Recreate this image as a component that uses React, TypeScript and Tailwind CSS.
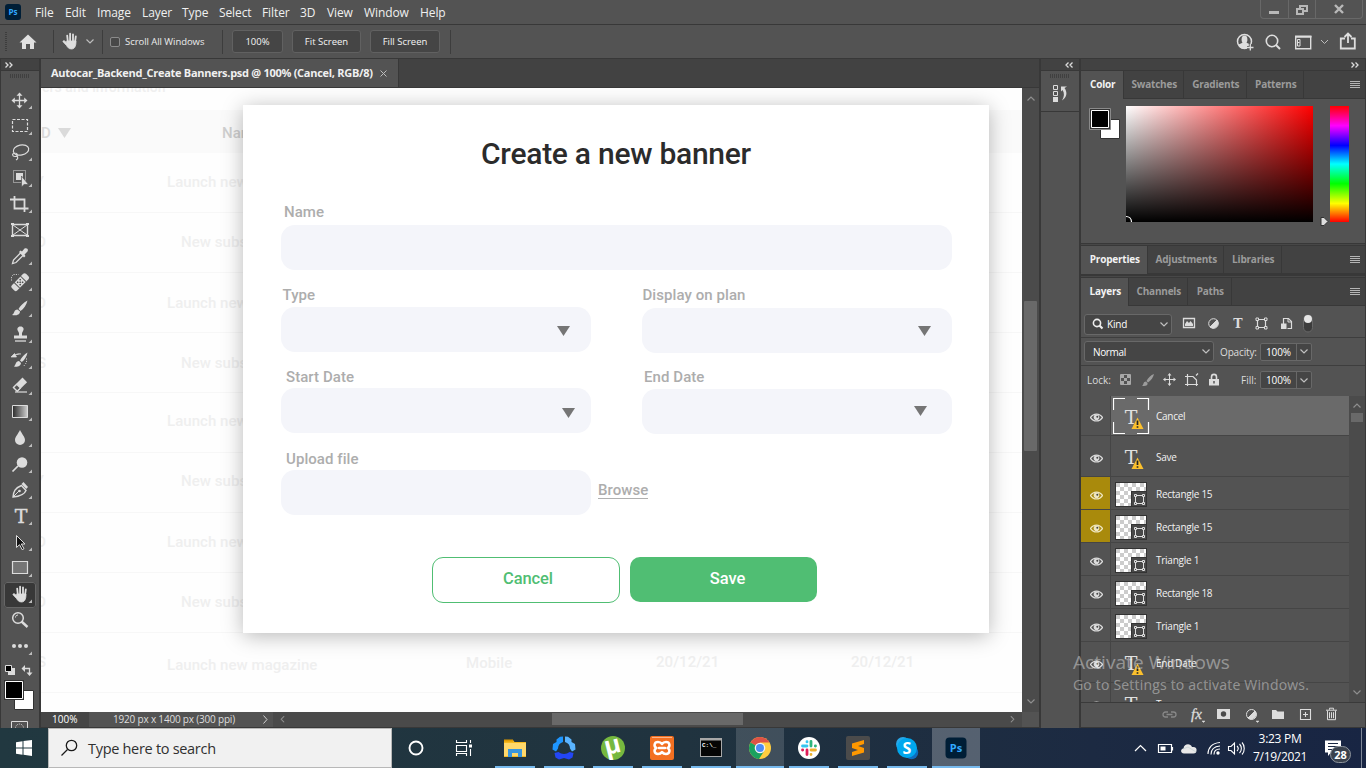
import React from "react";

const UI = "font-['Open_Sans','Noto_Sans',sans-serif]";

/* ---------- shared bits ---------- */

function Chevron({ className, size = 8 }: { className?: string; size?: number }) {
  return (
    <svg className={className} width={size} height={size / 2 + 1} viewBox="0 0 8 5" fill="none" stroke="currentColor" strokeWidth="1.2">
      <path d="M.5.5 4 4 7.5.5" />
    </svg>
  );
}

function DoubleArrow({ flip = false }: { flip?: boolean }) {
  return (
    <svg className={flip ? "rotate-180" : ""} width="8" height="6" viewBox="0 0 8 6" fill="none" stroke="#dcdcdc" strokeWidth="1.3">
      <path d="M.5.5 3 3 .5 5.5M4.5.5 7 3 4.5 5.5" />
    </svg>
  );
}

function Hand({ x = 0, y = 0 }: { x?: number; y?: number }) {
  return (
    <g transform={`translate(${x} ${y})`} stroke="#dedede" strokeLinecap="round" fill="none">
      <path d="M5.2 3.2 5.8 9M8.1 1.2V9M11 1.8V9M13.8 4 13 10" strokeWidth="1.8" />
      <path d="M4.8 8.5H14C14 12 13.500 16.500 9.5 16.500 6.5 16.500 5.5 14.5 4.5 13L1 9.2C.8 8.2 2 8 2.6 8.4L5 10.5Z" fill="#dedede" strokeWidth=".8" strokeLinejoin="round" />
    </g>
  );
}

/* ---------- top bars ---------- */

const menus: [string, string][] = [
  ["File", "w-[30px]"],
  ["Edit", "w-8"],
  ["Image", "w-[45px]"],
  ["Layer", "w-10"],
  ["Type", "w-[37px]"],
  ["Select", "w-[43px]"],
  ["Filter", "w-[38px]"],
  ["3D", "w-[27px]"],
  ["View", "w-[37px]"],
  ["Window", "w-14"],
  ["Help", "w-8"],
];

function MenuBar() {
  return (
    <header className="flex h-[25px] shrink-0 justify-between border-b border-[#383838] bg-[#535353]">
      <div className="flex items-center">
        <div className="ml-[5px] flex h-4 w-4 items-center justify-center rounded-[3px] bg-[#001e36] text-[8px] font-bold leading-none text-[#31a8ff]">Ps</div>
        <nav className="ml-[14px] flex pt-px text-[12px] leading-none tracking-[-0.100px] text-[#f0f0f0]">
          {menus.map(([m, w]) => (
            <span key={m} className={`${w} shrink-0 whitespace-nowrap`}>{m}</span>
          ))}
        </nav>
      </div>
      <div className="mr-[3px] flex h-[19px] rounded-b border border-t-0 border-[#686868]">
        <div className="flex w-7 justify-center border-r border-[#686868]">
          <svg className="-ml-[2px]" width="12" height="18"><path d="M1 11h10v3H1z" fill="#b8b8b8" /></svg>
        </div>
        <div className="flex w-[27px] justify-center border-r border-[#686868]">
          <svg width="14" height="18" fill="none" stroke="#b8b8b8" strokeWidth="2"><path d="M5 9V6h7v5H9M2 9h6v5H2z" /></svg>
        </div>
        <div className="flex w-[46px] justify-center">
          <svg width="12" height="18" stroke="#b8b8b8" strokeWidth="2.400"><path d="m2 5 8 8M10 5l-8 8" /></svg>
        </div>
      </div>
    </header>
  );
}

function OptButton({ label, w }: { label: string; w: string }) {
  return (
    <button className={`${w} h-[23px] rounded-[3px] border-[1.500px] border-[#616161] bg-[#454545] text-[9.500px] leading-none text-[#f4f4f4]`}>{label}</button>
  );
}

function OptionsBar() {
  return (
    <div className="flex h-[34px] shrink-0 items-center justify-between border-b border-[#383838] bg-[#535353]">
      <div className="flex items-center">
        <svg width="56" height="33">
          <path d="M6 7v19" stroke="#3d3d3d" strokeWidth="2" strokeDasharray="1 1" />
          <path d="m28 9.500 8.500 8H34V24h-4v-5h-4v5h-4v-6.500h-2.500z" fill="#e0e0e0" />
          <path d="M53.500 5v23" stroke="#3d3d3d" />
        </svg>
        <svg width="28" height="33"><Hand x={6} y={7.500} /></svg>
        <Chevron className="ml-[2px] text-[#bdbdbd]" />
        <div className="ml-2 h-6 w-px bg-[#3d3d3d]" />
        <div className="ml-[7px] h-[10px] w-[10px] rounded-[2px] border border-[#8b8b8b] bg-[#484848]" />
        <span className="ml-[5px] w-24 whitespace-nowrap text-[9.500px] leading-none tracking-[-0.050px] text-[#ececec]">Scroll All Windows</span>
        <div className="ml-px h-6 w-px bg-[#3d3d3d]" />
        <div className="ml-[9px] flex gap-[9px]">
          <OptButton label="100%" w="w-[51px]" />
          <OptButton label="Fit Screen" w="w-[69px]" />
          <OptButton label="Fill Screen" w="w-[70px]" />
        </div>
        <div className="ml-[10px] h-6 w-px bg-[#3d3d3d]" />
      </div>
      <svg width="140" height="33" fill="none" stroke="#dedede">
        <circle cx="18.500" cy="16.500" r="7" strokeWidth="1.500" />
        <path d="M12.500 19.500C14 18.500 16 18.500 16.500 17.500h4c.5 1 2.500 1 4 2-1.500 3.500-4 4.500-6 4.500s-5-1-6-4.500z" fill="#dedede" stroke="none" />
        <ellipse cx="18.500" cy="14.500" rx="2.900" ry="4" fill="#dedede" stroke="none" />
        <path d="M21 22.500h6.500M24.300 19v6.500" stroke="#535353" strokeWidth="3" />
        <path d="M21 22.500h6.500M24.300 19v6.500" strokeWidth="1.300" />
        <circle cx="46" cy="16" r="5.700" strokeWidth="1.600" />
        <path d="m50 20 4 4" strokeWidth="2" />
        <path d="M69.700 11.700h15v12h-15z" strokeWidth="1.400" />
        <path d="M69 11.500h16.500" strokeWidth="2" />
        <path d="M71.500 14.500h2.500v6.500h-2.500zM71.500 17.500h2" strokeWidth="1" />
        <path d="m95 15 3.500 3.500 3.500-3.500" stroke="#bdbdbd" />
        <path d="M119 13.500h-4.200v10h14v-10H125M122 18V8.500M118.500 12 122 8.500l3.500 3.500" strokeWidth="1.800" />
      </svg>
    </div>
  );
}

/* ---------- tool column ---------- */

const L = "#dcdcdc";
const tools: { name: string; icon: React.ReactNode; menu?: boolean }[] = [
  { name: "move", icon: <><path d="M13.500 6v13M7 12.500h13" stroke={L} strokeWidth="1.300" /><path d="m13.500 4.500 3 3.300h-6zM13.500 20.500l3-3.300h-6zM5.500 12.500l3.300-3v6zM21.500 12.500l-3.300-3v6z" fill={L} /></> },
  { name: "marquee", icon: <path d="M6.500 5.500h15v12h-15z" fill="none" stroke={L} strokeWidth="1.200" strokeDasharray="3 1.500" /> },
  { name: "lasso", icon: <g fill="none" stroke={L} strokeWidth="1.200"><ellipse cx="15" cy="10" rx="7.800" ry="5" transform="rotate(-12 15 10)" /><path d="M8 13.500c-2 0-2 3 1 3s3-3 .5-3.500M10.500 15.500c2 2 1.500 3.500-.5 4.500" /></g> },
  { name: "object-select", icon: <><path d="M7.500 4.500h12v12h-12z" fill="none" stroke={L} strokeDasharray="1 1" /><path d="M10 7h7v7h-7z" fill={L} /><path d="M15.500 10v11l2.600-2.500h4.400z" fill={L} stroke="#535353" strokeWidth=".7" /></> },
  { name: "crop", icon: <path d="M4 7.500h14.500V20M8.500 4v12.500H22.500" fill="none" stroke={L} strokeWidth="1.800" /> },
  { name: "frame", menu: false, icon: <g fill="none" stroke={L}><path d="M6.500 6.500h15v11h-15z" strokeWidth="1.400" /><path d="m7 7 14 10M21 7 7 17" /><path d="M5 5h3v2H5zM20 5h3v2h-3zM5 17h3v2H5zM20 17h3v2h-3z" fill={L} stroke="none" /></g> },
  { name: "eyedropper", icon: <g transform="translate(0 -.5)"><path d="m15 9-7.500 7.500L6.500 20l3.500-1 7.500-7.500" fill="none" stroke={L} strokeWidth="1.300" /><path d="m13 8.500 1.500-1.500 1.500 1L18.500 5c3-1 4 1 3 3L18.500 11l1 1.500L18 14z" fill={L} /></g> },
  { name: "healing", icon: <g transform="translate(0 -1)"><g transform="rotate(-45 14 13)"><rect x="4" y="9.500" width="20" height="7.500" rx="2" fill={L} /><path d="M9.500 9v8M18.500 9v8" stroke="#535353" /><path d="M11.500 11.500h1.500M15 11.500h1.500M11.500 15h1.500M15 15h1.500M13.200 13.300h1.500" stroke="#444" strokeWidth="1.400" /></g><path d="M5.500 11.500v-4l2-2h5" stroke={L} strokeDasharray="1 1.300" fill="none" /></g> },
  { name: "brush", icon: <path d="M21.500 4.500c-4 2-7.500 5.500-9 8.500l2 2c3-2 6-6 7-10.500zM11.500 13.500c-4 0-2.500 4-5.500 5.500 3.500 1 8 0 8-3.500z" fill={L} /> },
  { name: "stamp", icon: <g transform="translate(0 -.5)"><path d="M14.500 5c3 0 3.800 2.500 2.500 4.500l-1 2V14h5v3H8v-3h5v-2.500l-1-2C10.700 7.500 11.500 5 14.500 5z" fill={L} /><path d="M9 19.500h11" stroke={L} strokeWidth="1.300" /></g> },
  { name: "history-brush", icon: <g transform="translate(0 -.5)"><path d="M21.500 5c-3 1.500-6 5-7.500 8l1.800 1.500c3-2 5-6 5.700-9.500zM13 13.500c-3.500 0-3 4-5 5.500 3 1 7-.5 7-3.500z" fill={L} /><path d="M5 9.500 8.500 6l2 3.500zM8 8c2-1.500 5-2 7-1.500" fill={L} stroke={L} strokeWidth=".7" /><path d="M20.500 11v4l-3 4" stroke={L} fill="none" strokeDasharray="1 1.400" /></g> },
  { name: "eraser", icon: <><g transform="rotate(-45 14 11)"><path d="M7 7.500h14v6.500H7z" fill={L} /><path d="M7.700 8.200h4.500v5.200H7.700z" fill="#535353" stroke={L} strokeWidth="1.200" /></g><path d="M9 18h12" stroke={L} strokeWidth="1.200" /></> },
  { name: "gradient", icon: <><defs><linearGradient id="tg"><stop stopColor="#2a2a2a" /><stop offset="1" stopColor="#cfcfcf" /></linearGradient></defs><path d="M6.500 5.500h15v12h-15z" fill="url(#tg)" stroke={L} /></> },
  { name: "blur", icon: <path d="M14 4.500c2 4 5 7 5 10a5 5 0 0 1-10 0c0-3 3-6 5-10z" fill={L} transform="translate(0 -.5)" /> },
  { name: "dodge", icon: <><circle cx="16" cy="10.500" r="5.300" fill={L} /><path d="m12 14-5.500 5.500" stroke={L} strokeWidth="1.700" /></> },
  { name: "pen", icon: <g transform="translate(0 -.5)"><path d="M7 19.500C7.500 14 9 10.500 15.500 8l4.500 5c-2 5-7 6-13 6.500z" fill="none" stroke={L} strokeWidth="1.400" /><path d="m7.500 19 5.500-5.500" stroke={L} /><circle cx="13.500" cy="13.500" r="1.300" fill={L} /><path d="m15.500 6.500 2-2 4.500 5-1.800 2z" fill={L} /></g> },
  { name: "type", icon: <text x="15" y="19" textAnchor="middle" fontFamily="DejaVu Serif" fontSize="19" fill={L} stroke={L} strokeWidth=".4">T</text> },
  { name: "path-select", icon: <path d="M10.500 5.500V17.500l3-2.800 2.700 5 1.800-1-2.700-4.700H19z" fill="#151515" stroke={L} /> },
  { name: "rectangle", icon: <path d="M6.500 5.500h15v12h-15z" fill="#757575" stroke={L} strokeWidth="1.200" /> },
  { name: "hand", icon: <Hand x={6} y={3.500} /> },
  { name: "zoom", menu: false, icon: <g fill="none" stroke={L}><circle cx="12" cy="10" r="5.300" strokeWidth="1.500" /><path d="M9.500 9.500c0-1.500 1-2.500 2.500-2.500" /><path d="m15.500 13.500 6 5.500" strokeWidth="2.400" /></g> },
  { name: "more", icon: <g fill={L}><circle cx="8" cy="12" r="2" /><circle cx="14" cy="12" r="2" /><circle cx="20" cy="12" r="2" /></g> },
];

function ToolColumn() {
  return (
    <aside className="flex w-[41px] shrink-0 flex-col overflow-hidden border-l border-r-2 border-[#383838] bg-[#535353]">
      <div className="flex h-3 shrink-0 items-center border-b border-[#383838] bg-[#424242] pl-1"><DoubleArrow /></div>
      <svg className="shrink-0" width="38" height="17"><path d="M9 5h20" stroke="#404040" strokeWidth="4" strokeDasharray="1 1" /></svg>
      {tools.map((t) => (
        <div key={t.name} className="flex h-[26px] shrink-0 pl-[3px]">
          <svg width="32" height="26" viewBox="-2 0 32 26" className={t.name === "hand" ? "h-[26px] rounded-[3px] bg-[#383838] outline outline-1 -outline-offset-1 outline-[#666]" : ""}>
            {t.icon}
            {t.menu !== false && <path d="M26 17.500V21h-3.500z" fill="#bdbdbd" />}
          </svg>
        </div>
      ))}
      <svg className="shrink-0" width="38" height="68">
        <path d="M7 8h7v7H7z" fill={L} /><path d="M4.500 5.500h6v6h-6z" fill="#000" stroke={L} />
        <path d="M23 8.500h5.500V14" stroke={L} strokeWidth="1.300" fill="none" /><path d="M20.500 8.500 24 5v7zM28.500 16l-3-3.500h6z" fill={L} />
        <path d="M13.500 30.500h19v19h-19z" fill="#fff" stroke="#333" />
        <path d="M3 20h20v20H3z" fill="#333" /><path d="M4.500 21.500h17v17h-17z" fill="#000" stroke="#fff" />
        <path d="M10.500 61.500h16v10h-16z" fill="none" stroke={L} /><circle cx="18.500" cy="68" r="4" fill="none" stroke={L} strokeDasharray="1 1" />
      </svg>
    </aside>
  );
}

/* ---------- document ---------- */

const rows: [string, string, string, string][] = [
  ["MONTHLY", "w-[3px]", "Launch new magazine", "pl-[126px]"],
  ["AD", "w-[5px]", "New subscription", "pl-[140px]"],
  ["AD", "w-[5px] pt-[2px]", "Launch new magazine", "pl-[126px] pt-[2px]"],
  ["ADS", "w-[5px] pt-px", "New subscription", "pl-[140px] pt-px"],
  ["", "w-0", "Launch new magazine", "pl-[126px] pb-[2px]"],
  ["MONTHLY", "w-[3px] pb-[2px]", "New subscription", "pl-[140px] pb-[2px]"],
  ["AD", "w-[5px]", "Launch new magazine", "pl-[126px]"],
  ["AD", "w-[5px]", "New subscription", "pl-[140px]"],
  ["ADS", "w-[5px]", "Launch new magazine", "pl-[126px] pt-[5px]"],
];

function Backdrop() {
  return (
    <div className="flex flex-col text-[15px] font-medium leading-none text-[#efefef]">
      <div className="flex h-[22px] items-start overflow-hidden"><span className="-mt-[8px] ml-px whitespace-nowrap text-[14px] tracking-[0.050px]">ers and information</span></div>
      <div className="flex h-[43px] items-center bg-[#fafafa] pt-[3px] text-[#d9d9d9]">
        <span className="w-[17px]">D</span>
        <svg width="13" height="10"><path d="M0 0h13L6.500 10z" fill="#dadada" /></svg>
        <span className="ml-[151px] text-[#cfcfcf]">Name</span>
      </div>
      {rows.map(([kind, shift, name, pad], i) => (
        <div key={i} className="grid h-[60px] shrink-0 grid-cols-1 items-center border-b border-[#f7f7f7]">
          <div className={`${shift} col-start-1 row-start-1 flex justify-end overflow-hidden`}><span className="whitespace-nowrap">{kind}</span></div>
          <div className={`${pad} col-start-1 row-start-1 flex`}>
            <span className="w-[299px] whitespace-nowrap tracking-[0.050px]">{name}</span>
            {i === 8 && (
              <>
                <span className="-mt-[2px] w-[190px] shrink-0 tracking-[0.100px]">Mobile</span>
                <span className="-mt-[3px] w-[195px] shrink-0 tracking-[0.050px]">20/12/21</span>
                <span className="-mt-[3px] tracking-[0.050px]">20/12/21</span>
              </>
            )}
          </div>
        </div>
      ))}
    </div>
  );
}

function Field({ label, labelPad, labelH = "h-[21px]", fieldClass = "w-[310px]", arrow, className = "" }: { label: string; labelPad: string; labelH?: string; fieldClass?: string; arrow?: string; className?: string }) {
  return (
    <label className={`flex flex-col ${className}`}>
      <span className={`${labelPad} ${labelH} text-[15px] font-medium leading-[18px] tracking-[0.070px] text-[#adadad]`}>{label}</span>
      <span className={`${fieldClass} flex h-[45px] items-center justify-end rounded-[14px] bg-[#f4f5fa]`}>
        {arrow && <svg className={arrow} width="13" height="10"><path d="M0 0h13L6.500 10z" fill="#757575" /></svg>}
      </span>
    </label>
  );
}

function BannerDialog() {
  return (
    <section className="absolute left-[202px] top-[17px] flex h-[528px] w-[746px] flex-col bg-white pl-[38px] shadow-[0_3px_20px_rgba(0,0,0,0.280)]">
      <h1 className="mt-[31px] h-[67px] w-[670px] text-center text-[30px] font-medium leading-9 tracking-[-0.260px] text-[#2b2b2b]">Create a new banner</h1>
      <Field label="Name" labelPad="pl-[3px]" labelH="h-[22px]" fieldClass="w-[671px]" />
      <div className="mt-4 flex gap-[51px]">
        <Field label="Type" labelPad="pl-[1.500px]" arrow="mr-[21px] mt-[2px]" />
        <Field label="Display on plan" labelPad="pl-[0.500px]" labelH="h-[22px]" arrow="mr-[21px]" />
      </div>
      <div className="mt-[15px] flex gap-[51px]">
        <Field label="Start Date" labelPad="pl-[5px]" labelH="h-5" arrow="mr-4 mt-1" />
        <Field label="End Date" labelPad="pl-[2px]" arrow="mr-[25px] -mt-[2px]" />
      </div>
      <div className="mt-4 flex">
        <Field label="Upload file" labelPad="pl-[5px]" labelH="h-5" />
        <a className="ml-[7px] mt-[31px] h-[18px] border-b border-[#b0b0b0] text-[15px] font-medium leading-[18px] tracking-[0.070px] text-[#adadad]">Browse</a>
      </div>
      <div className="ml-[151px] mt-[42px] flex gap-[10px] text-[16.500px] font-medium">
        <button className="h-[46px] w-[188px] rounded-[11px] border-[1.500px] border-[#50be73] pb-[2px] pl-1 tracking-[-0.100px] text-[#50be73]">Cancel</button>
        <button className="h-[45px] w-[187px] rounded-[10px] bg-[#50be73] pb-px pl-2 tracking-[-0.100px] text-white">Save</button>
      </div>
    </section>
  );
}

function DocumentArea() {
  return (
    <main className="flex w-[999px] shrink-0 flex-col border-r border-[#383838] bg-[#424242]">
      <div className="flex h-[29px] shrink-0 border-b border-[#383838]">
        <div className="flex w-[358px] items-center border-r border-[#383838] bg-[#535353] pl-[10px] text-[11px] font-bold text-[#f0f0f0]">
          <span className="w-[329px] whitespace-nowrap tracking-[-0.280px]">Autocar_Backend_Create Banners.psd @ 100% (Cancel, RGB/8)</span>
          <svg width="7" height="7" stroke="#bdbdbd"><path d="m.5.5 6 6M6.500.5l-6 6" /></svg>
        </div>
      </div>
      <div className="flex h-[624px] shrink-0">
        <div className="relative h-full w-[981px] overflow-hidden bg-[#fefefe] font-[Roboto,sans-serif]">
          <Backdrop />
          <BannerDialog />
        </div>
        <div className="flex w-[17px] flex-col items-center justify-between bg-[#4b4b4b] py-2 text-[#8f8f8f]">
          <Chevron className="rotate-180" />
          <div className="mb-12 h-[150px] w-[13px] rounded-[1px] bg-[#696969]" />
          <Chevron />
        </div>
      </div>
      <div className="flex h-[15px] shrink-0 items-center text-[10px] leading-none text-[#dedede]">
        <span className="flex h-full w-12 items-center bg-[#464646] pb-px pl-[11px] text-white">100%</span>
        <span className="flex h-full w-[184px] items-center justify-between bg-[#535353] pb-px pl-6 pr-[5px]">
          <span className="whitespace-nowrap tracking-[-0.190px]">1920 px x 1400 px (300 ppi)</span>
          <svg width="5" height="9" fill="none" stroke="#d0d0d0"><path d="m.5.5 3.500 4-3.500 4" /></svg>
        </span>
        <span className="flex h-full w-[749px] items-center bg-[#4a4a4a] pb-px text-[#8f8f8f]">
          <Chevron className="ml-[6px] rotate-90" size={7} />
          <span className="ml-[266px] h-3 w-[191px] bg-[#696969]" />
          <Chevron className="ml-[266px] -rotate-90" size={7} />
        </span>
        <span className="h-full flex-1 bg-[#535353]" />
      </div>
      <div className="flex-1 bg-[#383838]" />
    </main>
  );
}

/* ---------- right dock ---------- */

function IconDock() {
  return (
    <aside className="flex w-[38px] shrink-0 flex-col bg-[#535353]">
      <div className="flex h-3 items-center border-b border-[#383838] bg-[#424242] pl-6"><DoubleArrow flip /></div>
      <svg width="38" height="41" fill="none">
        <path d="M9 5h20" stroke="#404040" strokeWidth="4" strokeDasharray="1 1" />
        <path d="M12.500 14.500h4v4h-4zM12.500 20.500h4v4h-4z" stroke={L} /><path d="M12 26h5v5h-5z" fill={L} />
        <path d="M20 15.500h6l-2.500 1.500c3.500 5 2 9.500-2.500 12.500 2.500-4 2.500-7.500.5-10.500L20 20.500z" fill={L} />
        <path d="M0 40.500h38" stroke="#383838" />
      </svg>
    </aside>
  );
}

function Tabs({ items, h = "h-7" }: { items: [string, string][]; h?: string }) {
  return (
    <div className={`flex ${h} shrink-0 bg-[#424242] text-[10px] font-bold leading-none tracking-[-0.200px] text-[#9b9b9b]`}>
      {items.map(([label, w], i) => (
        <span key={label} className={`${w} flex items-center justify-center whitespace-nowrap border-r border-[#383838] pl-[1.500px] ${i === 0 ? "bg-[#535353] pb-[3px] text-[#f2f2f2]" : "border-b pb-[2px]"}`}>{label}</span>
      ))}
      <span className="flex flex-1 items-center justify-end border-b border-[#383838] pr-[5px]">
        <svg width="10" height="8" stroke="#b5b5b5"><path d="M0 .5h10M0 2.500h10M0 4.500h10M0 6.500h10" /></svg>
      </span>
    </div>
  );
}

function ColorPanel() {
  return (
    <div className="flex h-[144px] shrink-0 pt-[7px]">
      <svg className="ml-2" width="37" height="40">
        <path d="M11.500 13.500h19v19h-19z" fill="#fff" stroke="#333" />
        <path d="M.5 2.500h21v21H.5z" fill="#333" stroke="#8a8a8a" />
        <path d="M2.500 4.500h17v17h-17z" fill="#000" stroke="#fff" />
      </svg>
      <div className="flex h-[116px] w-[187px] items-end bg-[linear-gradient(to_top,#000,transparent),linear-gradient(to_right,#fff,#f00)]">
        <svg width="7" height="7" fill="none" stroke="#fff" strokeWidth="1.200"><path d="M0 1.500c3 0 5.500 2 5.500 5.500" /></svg>
      </div>
      <svg className="ml-[7px] mt-[109px]" width="10" height="14"><path d="M1 2.500h3l4 4-4 4H1z" fill="#dedede" stroke="#333" /></svg>
      <div className="h-[116px] w-[19px] bg-[linear-gradient(#f00,#f0f_17%,#00f_34%,#0ff_50%,#0f0_67%,#ff0_84%,#f00)]" />
    </div>
  );
}

function PercentBox() {
  return (
    <span className="flex h-[18px] w-[52px] items-center rounded-[2px] border border-[#686868] bg-[#454545] text-[10px] text-white">
      <span className="w-[35px] text-center tracking-[-0.100px]">100%</span>
      <span className="flex h-full flex-1 items-center justify-center border-l border-[#686868] text-[#c0c0c0]"><Chevron /></span>
    </span>
  );
}

function LayerControls() {
  return (
    <div className="shrink-0 text-[10px] leading-none text-[#dcdcdc]">
      <div className="flex h-8 items-center border-b border-[#3e3e3e] pl-[3px] pt-[5px]">
        <span className="flex h-[21px] w-[88px] items-center rounded-[3px] border border-[#686868] bg-[#454545] pl-[7px] pr-[3px] text-white">
          <svg width="12" height="12" fill="none" stroke="#eee" strokeWidth="1.600"><circle cx="5" cy="5" r="3.600" /><path d="m7.500 7.500 3 3" strokeWidth="2.200" /></svg>
          <span className="ml-[3px] flex-1 tracking-[-0.200px]">Kind</span><Chevron className="text-[#c0c0c0]" />
        </span>
        <svg width="141" height="26" fill="none" stroke={L}>
          <path d="M11.500 7.500h11v9h-11z" strokeWidth="1.300" /><path d="M13 15v-2l2-3 2 2 1.500-2 2.500 3v2z" fill={L} stroke="none" />
          <circle cx="41.500" cy="12.500" r="4.800" /><path d="M38 16 45 9a5 5 0 0 1-7 7z" fill={L} />
          <text x="66" y="17" textAnchor="middle" fontFamily="DejaVu Serif" fontWeight="bold" fontSize="12.500" fill={L} stroke="none">T</text>
          <path d="M85.500 8.500h8v8h-8z" strokeWidth="1.200" /><path d="M84 7h2.500v2.500H84zM92.500 7H95v2.500h-2.500zM84 15.500h2.500V18H84zM92.500 15.500H95V18h-2.500z" fill="#535353" />
          <path d="M111.500 13V7.500h5l3 3v7h-4" strokeWidth="1.200" /><path d="M116 7v4h4" /><path d="M109 12.500h5.500v5.500H109z" fill={L} stroke="none" />
          <rect x="131.500" y="4" width="9" height="17" rx="4.500" fill="#3c3c3c" stroke="#696969" /><circle cx="136" cy="8" r="4" fill="#e6e6e6" stroke="none" />
        </svg>
      </div>
      <div className="flex h-7 items-center border-b border-[#3e3e3e] pl-[3px]">
        <span className="flex h-[21px] w-[130px] items-center justify-between rounded-[3px] border border-[#686868] bg-[#454545] pl-2 pr-[3px] text-white"><span className="tracking-[-0.350px]">Normal</span><Chevron className="text-[#c0c0c0]" /></span>
        <span className="w-[46px] whitespace-nowrap pl-[6px] tracking-[-0.150px]">Opacity:</span>
        <PercentBox />
      </div>
      <div className="flex h-[30px] items-center pb-[2px] pl-[6px]">
        <span className="w-[26px]">Lock:</span>
        <svg width="128" height="26" fill="none" stroke={L}>
          <path d="M7.500 7.500h10v10h-10z" stroke="#a8a8a8" /><path d="M8 8h3v3H8zM14 8h3v3h-3zM11 11h3v3h-3zM8 14h3v3H8zM14 14h3v3h-3z" fill="#a8a8a8" stroke="none" />
          <path d="M41 7c-3 1-6 4-7.500 7l1.500 1.500C38 13.500 40.500 10 41 7zM33 14.500c-3 0-2 3-4 4.500 3 0 6 0 5.500-3z" fill="#9c9c9c" stroke="none" />
          <path d="M56.500 8v9M52 12.500h9" /><path d="m56.500 6 2 2.500h-4zM56.500 19l2-2.500h-4zM50 12.500l2.500-2v4zM63 12.500l-2.500-2v4z" fill={L} stroke="none" />
          <path d="M72 9.500h8l3.500 3.500v4.500M72 17.500h13M74.500 7v12M83.500 15v4M85 6.500l-2 2" strokeWidth="1.200" />
          <path d="M96 12h10v6.500H96z" fill={L} stroke="none" /><path d="M98.500 12v-2c0-3.500 5-3.500 5 0v2" strokeWidth="1.600" /><path d="M101 14v2.500" stroke="#555" strokeWidth="1.500" />
        </svg>
        <span className="w-[19px] shrink-0 whitespace-nowrap">Fill:</span>
        <PercentBox />
      </div>
    </div>
  );
}

function Eye({ tint = "#dcdcdc" }: { tint?: string }) {
  return (
    <svg width="13" height="9" viewBox="0 0 13 9"><path d="M.5 4.500C3.500 0 9.500 0 12.500 4.500 9.500 9 3.500 9 .5 4.500z" fill="none" stroke={tint} strokeWidth="1.300" /><circle cx="6.500" cy="4.300" r="2.800" fill={tint} /><circle cx="7.300" cy="3.700" r="1" fill="#444" /></svg>
  );
}

function TextThumb({ selected }: { selected?: boolean }) {
  return (
    <svg width="37" height="37">
      {selected && <path d="M.5 12V.5H12M24 .5h11.500V12M35.500 24v11.500H24M12 35.500H.5V24" fill="none" stroke="#fff" strokeWidth="1.200" />}
      <text x="18" y="26" textAnchor="middle" fontFamily="DejaVu Serif" fontSize="19" fill="#e0e0e0">T</text>
      <path d="M24.500 19.500 30.500 31h-12z" fill="#fbc02d" /><path d="M24.500 22.500v4.500M24.500 28.300v1.500" stroke="#222" strokeWidth="1.700" />
    </svg>
  );
}

function ShapeThumb() {
  return (
    <span className="ml-[2px] mt-px flex h-[25px] w-8 items-end justify-end border border-[#333] bg-[repeating-conic-gradient(#fff_0_25%,#ccc_0_50%)] bg-[length:8px_8px]">
      <svg width="15" height="15"><path d="M0 0h15v15H0z" fill="#333" /><path d="M1 1h14v14H1z" fill="#484848" /><g fill="none" stroke="#dedede"><path d="M4.500 4.500h8v8h-8z" /><path d="M3.500 3.500h2v2h-2zM11.500 3.500h2v2h-2zM3.500 11.500h2v2h-2zM11.500 11.500h2v2h-2z" fill="#484848" /></g></svg>
    </span>
  );
}

const layers: { name: string; text?: boolean; marked?: boolean; selected?: boolean; h: string }[] = [
  { name: "Cancel", text: true, selected: true, h: "h-10" },
  { name: "Save", text: true, h: "h-[41px]" },
  { name: "Rectangle 15", marked: true, h: "h-[33px]" },
  { name: "Rectangle 15", marked: true, h: "h-[33px]" },
  { name: "Triangle 1", h: "h-[33px]" },
  { name: "Rectangle 18", h: "h-[33px]" },
  { name: "Triangle 1", h: "h-[33px]" },
  { name: "End Date", text: true, h: "h-[41px]" },
  { name: "Type", text: true, h: "h-[41px]" },
];

function LayerList() {
  return (
    <div className="flex h-[306px] shrink-0">
      <div className="flex w-[268px] flex-col overflow-hidden text-[10px] text-[#f2f2f2]">
        {layers.map((l, i) => (
          <div key={i} className={`flex ${l.h} shrink-0`}>
            <span className={`flex w-[30px] shrink-0 items-center justify-center border-b border-r border-[#454545] pl-[2px] pt-[4px] ${l.marked ? "bg-[#a98a0c]" : ""}`}><Eye tint={l.marked ? "#efe6c0" : "#dcdcdc"} /></span>
            <span className={`flex flex-1 items-center border-b border-[#454545] pl-[2px] pt-px ${l.selected ? "bg-[#6a6a6a]" : ""}`}>
              <span className="flex w-[43px] shrink-0 items-center">{l.text ? <TextThumb selected={l.selected} /> : <ShapeThumb />}</span>
              <span className="whitespace-nowrap pt-px tracking-[-0.260px]">{l.name}</span>
            </span>
          </div>
        ))}
      </div>
      <div className="flex w-4 flex-col items-center justify-between bg-[#4b4b4b] py-[7px] text-[#8f8f8f]">
        <div className="flex flex-col items-center gap-[5px]"><Chevron className="rotate-180" /><div className="h-[9px] w-3 bg-[#696969]" /></div>
        <Chevron />
      </div>
    </div>
  );
}

function PanelFooter() {
  return (
    <div className="flex h-[25px] shrink-0 justify-end border-t border-[#3a3a3a] pr-[27px]">
      <svg width="178" height="24" fill="none" stroke={L}>
        <path d="M6.500 9.500H4a2.500 2.500 0 0 0 0 5h2.500M9.500 9.500H12a2.500 2.500 0 0 1 0 5H9.500M5 12h6" stroke="#888" strokeWidth="1.300" transform="translate(1.500 -.5)" />
        <text x="31" y="16" fontFamily="Liberation Serif" fontStyle="italic" fontSize="15" fill={L} stroke={L} strokeWidth=".3">fx</text>
        <path d="M42 18h3l-1.500 1.500z" fill={L} strokeWidth=".5" />
        <path d="M57 6h13v10H57z" fill={L} stroke="none" /><circle cx="63.500" cy="11" r="2.700" fill="#4a4a4a" stroke="none" />
        <circle cx="91.500" cy="11.500" r="5" /><path d="m88 15 7-7a5 5 0 0 1-7 7z" fill={L} /><path d="M96 18h3l-1.500 1.500z" fill={L} strokeWidth=".5" />
        <path d="M112 7h4l1.500 1.500h6.500V16h-12z" fill={L} stroke="none" />
        <path d="M140.500 6.500h10v10h-10zM145.500 9v5M143 11.500h5" strokeWidth="1.100" />
        <path d="M166 7.500h11M169.500 7V5.500h4V7M167.500 8v9h8V8M169.500 9.500v6M171.500 9.500v6M173.500 9.500v6" transform="translate(0 -.3)" />
      </svg>
    </div>
  );
}

function Panels() {
  return (
    <aside className="flex flex-1 flex-col border-l-2 border-r border-[#383838] bg-[#535353]">
      <div className="flex h-3 shrink-0 items-center justify-end border-b border-[#383838] bg-[#424242] pr-[6px]"><DoubleArrow /></div>
      <Tabs items={[["Color", "w-[43px]"], ["Swatches", "w-[60px]"], ["Gradients", "w-[63px]"], ["Patterns", "w-[57px]"]]} />
      <ColorPanel />
      <div className="h-[3px] shrink-0 border-y border-[#383838] bg-[#474747]" />
      <Tabs items={[["Properties", "w-[67px]"], ["Adjustments", "w-[76px]"], ["Libraries", "w-[58px]"]]} />
      <div className="h-1 shrink-0 border-b border-t-2 border-[#383838] bg-[#474747]" />
      <Tabs items={[["Layers", "w-12"], ["Channels", "w-[59px]"], ["Paths", "w-11"]]} />
      <LayerControls />
      <LayerList />
      <PanelFooter />
      <div className="flex-1 bg-[#383838]" />
    </aside>
  );
}

/* ---------- taskbar ---------- */

const apps: { id: string; active?: string; icon: React.ReactNode }[] = [
  { id: "explorer", icon: <><path d="M1 4h9l1.500 2H23v15H1z" fill="#f5b921" /><path d="M1 7h22v13H1z" fill="#ffd86b" /><path d="M1 3.500h9v2H1z" fill="#e09a00" /><path d="M5 21v-8h14v8h-4v-4h-6v4z" fill="#3a96dd" /></> },
  { id: "hubstaff", icon: <g><path d="M11 .5v5.500C8 7 6 9 6 12.500l-2 3-3.500-2L1 8 4.500 6V3.500L8 .8z" fill="#1e96ff" /><path d="M13 .5v5.500c3 1 5 3 5 6.500l2 3 3.500-2L23 8l-3.500-2V3.500L16 .8z" fill="#5ab4ff" /><path d="M6.500 16c3 2.500 8 2.500 11 0l4 1-1 4.500-3.500 2-5-1.500-5 1.500-3.500-2-1-4.500z" fill="#2346f5" /></g> },
  { id: "utorrent", icon: <><circle cx="12" cy="12" r="12" fill="#76b83f" /><text x="12" y="17.500" textAnchor="middle" fontFamily="Open Sans" fontWeight="bold" fontSize="25" fill="#fff" transform="rotate(-14 12 12)">µ</text></> },
  { id: "xampp", icon: <><rect width="24" height="24" rx="2" fill="#f37021" /><path d="M2 1.500h20" stroke="#f9b48a" /><path d="M12 8C11 6.500 9.500 6 8 6c-4 0-4.500 4.500-1.500 6C3.500 13.500 4 18 8 18c1.500 0 3-.5 4-2 1 1.500 2.500 2 4 2 4 0 4.500-4.500 1.500-6C20.500 10.500 20 6 16 6c-1.500 0-3 .5-4 2z" fill="none" stroke="#fff" strokeWidth="2.500" strokeLinejoin="round" /><path d="M9 12h6" stroke="#fff" strokeWidth="2.500" strokeLinecap="round" /></> },
  { id: "cmd", icon: <><path d="M1 2h22v19H1z" fill="#a8a8a8" /><path d="M2 4.500h20V20H2z" fill="#050505" /><text x="3" y="11" fontFamily="Liberation Mono" fontSize="6" fontWeight="bold" fill="#fff">C:\_</text></> },
  { id: "chrome", active: "bg-white/15", icon: <><circle cx="12" cy="12" r="11" fill="#ffcd40" /><path d="M12 12 2.500 6.500a11 11 0 0 1 19 0z" fill="#de5246" /><path d="M2.500 6.500A11 11 0 0 0 11 23l5.500-8.500L12 12z" fill="#1aa15f" /><path d="M12 6.500h9.500L17 15z" fill="#ffcd40" /><circle cx="12" cy="12" r="5.300" fill="#f4f4f4" /><circle cx="12" cy="12" r="4" fill="#4c8bf5" /></> },
  { id: "slack", icon: <><circle cx="12" cy="12" r="11" fill="#fff" /><g strokeWidth="2.800" strokeLinecap="round"><path d="M5.500 10H10M10 5.700v.2" stroke="#36c5f0" /><path d="M14 5.500V10M18.300 10h.2" stroke="#2eb67d" /><path d="M14 14h4.500M14 18.300v.2" stroke="#ecb22e" /><path d="M10 14v4.500M5.700 14h-.2" stroke="#e01e5a" /></g></> },
  { id: "sublime", icon: <><rect width="24" height="24" rx="2" fill="#4b4b4b" /><path d="M6 7.500 18 4v4l-6 2 6 2v4.500L6 20v-4l6-2-6-2z" fill="#ff9800" /></> },
  { id: "skype", icon: <><circle cx="8" cy="8" r="7" fill="#28a8ea" /><circle cx="16.500" cy="16.500" r="6.700" fill="#0f6cbd" /><circle cx="12" cy="12" r="10" fill="#00a7ee" /><text x="12" y="18" textAnchor="middle" fontFamily="Open Sans" fontWeight="bold" fontSize="16" fill="#fff">S</text></> },
  { id: "photoshop", active: "bg-white/25", icon: <><rect x="1.500" y="1.500" width="21" height="21" rx="4" fill="#001e36" /><text x="12" y="15.500" textAnchor="middle" fontFamily="Open Sans" fontWeight="bold" fontSize="11" fill="#31a8ff">Ps</text></> },
];

function Taskbar() {
  return (
    <footer className="flex h-10 shrink-0 bg-[linear-gradient(to_right,#213840,#20333f_50%,#1c2a42_80%,#182543)] text-white">
      <div className="flex w-12 items-center justify-center"><svg width="16" height="16" fill="#fff"><path d="M0 2.200 6.500 1.300v6.200H0zM7.500 1.100 16 0v7.500H7.500zM0 8.500h6.500v6.300L0 13.800zM7.500 8.500H16V16l-8.500-1.200z" /></svg></div>
      <div className="flex w-[344px] items-center border border-[#b8b8b8] bg-[#f1f1f1] pl-3 text-[14.500px] tracking-[-0.300px] text-[#303030]">
        <svg width="17" height="18" fill="none" stroke="#1a1a1a" strokeWidth="1.300"><circle cx="10.500" cy="6.500" r="5.200" /><path d="m6.500 10.500-6 6" /></svg>
        <span className="ml-[10px] pt-[2px]">Type here to search</span>
      </div>
      <div className="flex w-12 items-center justify-center"><svg width="16" height="16"><circle cx="8" cy="8" r="6.500" fill="none" stroke="#fff" strokeWidth="1.900" /></svg></div>
      <div className="flex w-[47px] items-center justify-center"><svg width="18" height="16" fill="none" stroke="#fff" strokeWidth="1.100"><path d="M1.500 0v2.500h10V0M1.500 5.500h10v6h-10zM1.500 16v-2.500h10V16M15.500 0v3M15.500 9v7" /><path d="M14 4.500h3v3h-3z" fill="#fff" stroke="none" /></svg></div>
      <div className="ml-1 flex gap-px">
        {apps.map((a) => (
          <div key={a.id} className={`flex h-10 w-12 flex-col items-center justify-between pt-2 ${a.active ?? ""}`}>
            <svg width="24" height="24">{a.icon}</svg>
            <div className={`${a.active ? "w-12" : "w-10"} h-[2px] bg-[#76b9ed]`} />
          </div>
        ))}
      </div>
      <div className="ml-auto flex items-center">
        <svg width="120" height="40" fill="none" stroke="#fff" strokeWidth="1.200">
          <path d="m5 23 5.500-5.500L16 23" />
          <path d="M28.500 16.500h13v8h-13zM42.500 19v3.500" /><path d="M30.500 18.500h5v4h-5z" fill="#fff" stroke="none" />
          <path d="M54 25.500c-3.500 0-4-4.500-.5-5 .5-5 7-5.500 8.500-1.500 3.500-.5 5 1.500 4.500 3.500 0 2-1 3-3 3z" fill="#e8e8e8" stroke="none" /><path d="m53 21 5-2 8 5" stroke="#bcc" strokeWidth=".6" />
          <path d="M78 26c0-6 4-11 12-11.500M81 26.500c0-4.500 3-8 9-8.500M84 26.500c0-3 2-5.500 6-5.500" strokeWidth="1.100" /><circle cx="88" cy="25" r="1.700" fill="#fff" stroke="none" />
          <path d="M98.500 18.500h2.500l3.500-3.500v11L101 22.500h-2.500zM107 18c1.500 1.500 1.500 3.500 0 5M109.500 16c2.500 2.500 2.500 6.500 0 9M112 14.500c3 3 3 9 0 12" strokeWidth="1.100" />
        </svg>
        <div className="ml-[3px] w-[54px] text-center text-[12px] leading-[18px] tracking-[-0.300px]"><div>3:23 PM</div><div>7/19/2021</div></div>
        <svg className="ml-[14px]" width="40" height="40">
          <path d="M4 12.500h16v12H10L7 28v-3.500H4z" fill="#fff" /><path d="M7 15.500h10M7 18.500h10M7 21.500h6" stroke="#1b2944" />
          <rect x="9.500" y="18.500" width="20" height="16" rx="8" fill="#39414d" stroke="#8e959d" />
          <text x="19.500" y="30.500" textAnchor="middle" fontFamily="Open Sans" fontWeight="bold" fontSize="11" fill="#fff">28</text>
        </svg>
        <div className="h-10 w-px bg-[#7e8797]" /><div className="w-1" />
      </div>
    </footer>
  );
}

export default function App() {
  return (
    <div className={`relative flex h-[768px] w-[1366px] flex-col overflow-hidden bg-[#383838] ${UI}`}>
      <MenuBar />
      <OptionsBar />
      <div className="flex h-[669px] shrink-0">
        <ToolColumn />
        <DocumentArea />
        <div className="w-px shrink-0 bg-[#383838]" />
        <IconDock />
        <Panels />
      </div>
      <Taskbar />
      <div className="pointer-events-none absolute left-[1073px] top-[649px] whitespace-nowrap text-white/40">
        <div className="text-[19px] leading-[26px] tracking-[0.060px]">Activate Windows</div>
        <div className="text-[14px] leading-5 tracking-[0.190px]">Go to Settings to activate Windows.</div>
      </div>
    </div>
  );
}
